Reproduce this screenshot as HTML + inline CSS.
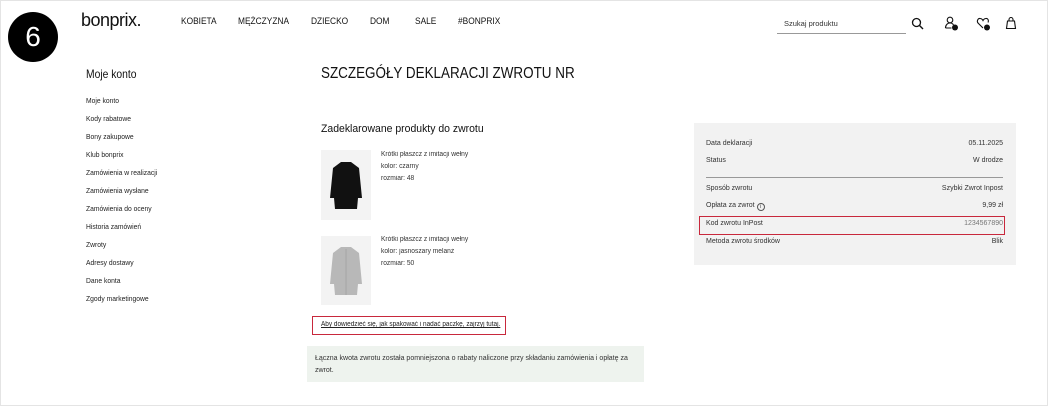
<!DOCTYPE html>
<html><head><meta charset="utf-8"><style>
*{margin:0;padding:0;box-sizing:border-box}
body{width:1048px;height:406px;background:#fff;font-family:"Liberation Sans",sans-serif;color:#222;position:relative;overflow:hidden}
.frame{position:absolute;left:0;top:0;width:1048px;height:406px;border:1px solid #e4e4e4}
.a{position:absolute;white-space:nowrap}
.sx{transform:scaleX(.86);transform-origin:left top}
.nav{top:16px;font-size:9.5px;color:#111;transform:scaleX(.88);transform-origin:left top}
.side{left:86px;font-size:7.5px;color:#222;transform:scaleX(.9);transform-origin:left top}
.p{font-size:7px;color:#333;left:381px;transform:scaleX(.95);transform-origin:left top}
.r{font-size:7px;color:#333}
.rl{left:706px}.rr{right:45px;text-align:right}
</style></head><body>
<div class="frame"></div>
<div class="a" style="left:8px;top:12px;width:50px;height:50px;border-radius:50%;background:#000;color:#fff;font-size:28px;text-align:center;line-height:50px">6</div>
<div class="a" style="left:81px;top:10px;font-size:18px;color:#111;letter-spacing:-.5px">bonprix.</div>
<div class="a nav" style="left:181px">KOBIETA</div>
<div class="a nav" style="left:238px">MĘŻCZYZNA</div>
<div class="a nav" style="left:311px">DZIECKO</div>
<div class="a nav" style="left:370px">DOM</div>
<div class="a nav" style="left:415px">SALE</div>
<div class="a nav" style="left:458px">#BONPRIX</div>
<div class="a" style="left:784px;top:19px;font-size:7.5px;color:#333">Szukaj produktu</div>
<div class="a" style="left:777px;top:33px;width:129px;height:1px;background:#999"></div>
<svg class="a" style="left:911px;top:17px" width="13" height="13" viewBox="0 0 13 13"><circle cx="5.5" cy="5.5" r="4" fill="none" stroke="#111" stroke-width="1.3"/><path d="M8.5 8.5L12 12" stroke="#111" stroke-width="1.4"/></svg>
<svg class="a" style="left:944px;top:16px" width="16" height="16" viewBox="0 0 16 16"><circle cx="6" cy="4" r="2.8" fill="none" stroke="#111" stroke-width="1.1"/><path d="M1.5 12c0-3 2-5 4.5-5s3 1 3.5 2M1.5 12h6" fill="none" stroke="#111" stroke-width="1.1"/><circle cx="11" cy="11.5" r="3" fill="#111"/></svg>
<svg class="a" style="left:976px;top:16px" width="16" height="16" viewBox="0 0 16 16"><path d="M7 12L2 7C0.5 5 2 2 4.3 2.5 5.5 2.7 6.5 3.5 7 4.5 7.5 3.5 8.5 2.7 9.7 2.5 12 2 13 4.5 12 6.5" fill="none" stroke="#111" stroke-width="1.1"/><circle cx="11" cy="11.5" r="3" fill="#111"/></svg>
<svg class="a" style="left:1005px;top:16px" width="12" height="14" viewBox="0 0 12 14"><path d="M1.5 12.5L2.5 5h7l1 7.5z M4 5V3.5a2 2 0 0 1 4 0V5" fill="none" stroke="#111" stroke-width="1.1"/></svg>

<div class="a sx" style="left:86px;top:67px;font-size:12px;color:#111">Moje konto</div>
<div class="a side" style="top:96px">Moje konto</div>
<div class="a side" style="top:114px">Kody rabatowe</div>
<div class="a side" style="top:132px">Bony zakupowe</div>
<div class="a side" style="top:150px">Klub bonprix</div>
<div class="a side" style="top:168px">Zamówienia w realizacji</div>
<div class="a side" style="top:186px">Zamówienia wysłane</div>
<div class="a side" style="top:204px">Zamówienia do oceny</div>
<div class="a side" style="top:222px">Historia zamówień</div>
<div class="a side" style="top:240px">Zwroty</div>
<div class="a side" style="top:258px">Adresy dostawy</div>
<div class="a side" style="top:276px">Dane konta</div>
<div class="a side" style="top:294px">Zgody marketingowe</div>

<div class="a" style="left:321px;top:65px;font-size:16px;color:#111;transform:scaleX(.84);transform-origin:left top">SZCZEGÓŁY DEKLARACJI ZWROTU NR</div>
<div class="a" style="left:321px;top:123px;font-size:11px;color:#111;transform:scaleX(.95);transform-origin:left top">Zadeklarowane produkty do zwrotu</div>

<div class="a" style="left:321px;top:150px;width:50px;height:70px;background:#f3f3f3"></div>
<svg class="a" style="left:321px;top:150px" width="50" height="70" viewBox="0 0 50 70"><path d="M20 12h10l4 3 4 3 3 30h-4l-1 11H14l-1-11H9l3-30 4-3z" fill="#111"/></svg>
<div class="a" style="left:321px;top:236px;width:50px;height:69px;background:#f3f3f3"></div>
<svg class="a" style="left:321px;top:236px" width="50" height="69" viewBox="0 0 50 69"><path d="M20 11h10l4 3 4 3 3 31h-4l-1 11H14l-1-11H9l3-31 4-3z" fill="#b8b8b8"/><path d="M25 13v46" stroke="#999" stroke-width=".6"/></svg>
<div class="a p" style="top:151px">Krótki płaszcz z imitacji wełny</div>
<div class="a p" style="top:163px">kolor: czarny</div>
<div class="a p" style="top:175px">rozmiar: 48</div>
<div class="a p" style="top:236px">Krótki płaszcz z imitacji wełny</div>
<div class="a p" style="top:248px">kolor: jasnoszary melanż</div>
<div class="a p" style="top:260px">rozmiar: 50</div>

<div class="a" style="left:312px;top:316px;width:194px;height:19px;border:1.5px solid #c8283c"></div>
<div class="a" style="left:321px;top:321px;font-size:7px;color:#222;text-decoration:underline;transform:scaleX(.92);transform-origin:left top">Aby dowiedzieć się, jak spakować i nadać paczkę, zajrzyj tutaj.</div>

<div class="a" style="left:307px;top:346px;width:337px;height:36px;background:#eef3ee"></div>
<div class="a" style="left:315px;top:353px;font-size:7px;color:#333;line-height:12px;white-space:normal;width:320px">Łączna kwota zwrotu została pomniejszona o rabaty naliczone przy składaniu zamówienia i opłatę za zwrot.</div>

<div class="a" style="left:694px;top:123px;width:322px;height:142px;background:#f2f2f2"></div>
<div class="a r rl" style="top:140px">Data deklaracji</div><div class="a r rr" style="top:140px">05.11.2025</div>
<div class="a r rl" style="top:157px">Status</div><div class="a r rr" style="top:157px">W drodze</div>
<div class="a" style="left:706px;top:177px;width:297px;height:1px;background:#999"></div>
<div class="a r rl" style="top:185px">Sposób zwrotu</div><div class="a r rr" style="top:185px">Szybki Zwrot Inpost</div>
<div class="a r rl" style="top:202px">Opłata za zwrot <span style="display:inline-block;width:8px;height:8px;border:1px solid #555;border-radius:50%;font-size:5px;text-align:center;line-height:6px;vertical-align:-1px">i</span></div><div class="a r rr" style="top:202px">9,99 zł</div>
<div class="a" style="left:699px;top:216px;width:306px;height:19px;border:1.5px solid #c8283c"></div>
<div class="a r rl" style="top:220px">Kod zwrotu InPost</div><div class="a r rr" style="top:220px;color:#777">1234567890</div>
<div class="a r rl" style="top:238px">Metoda zwrotu środków</div><div class="a r rr" style="top:238px">Blik</div>
</body></html>
